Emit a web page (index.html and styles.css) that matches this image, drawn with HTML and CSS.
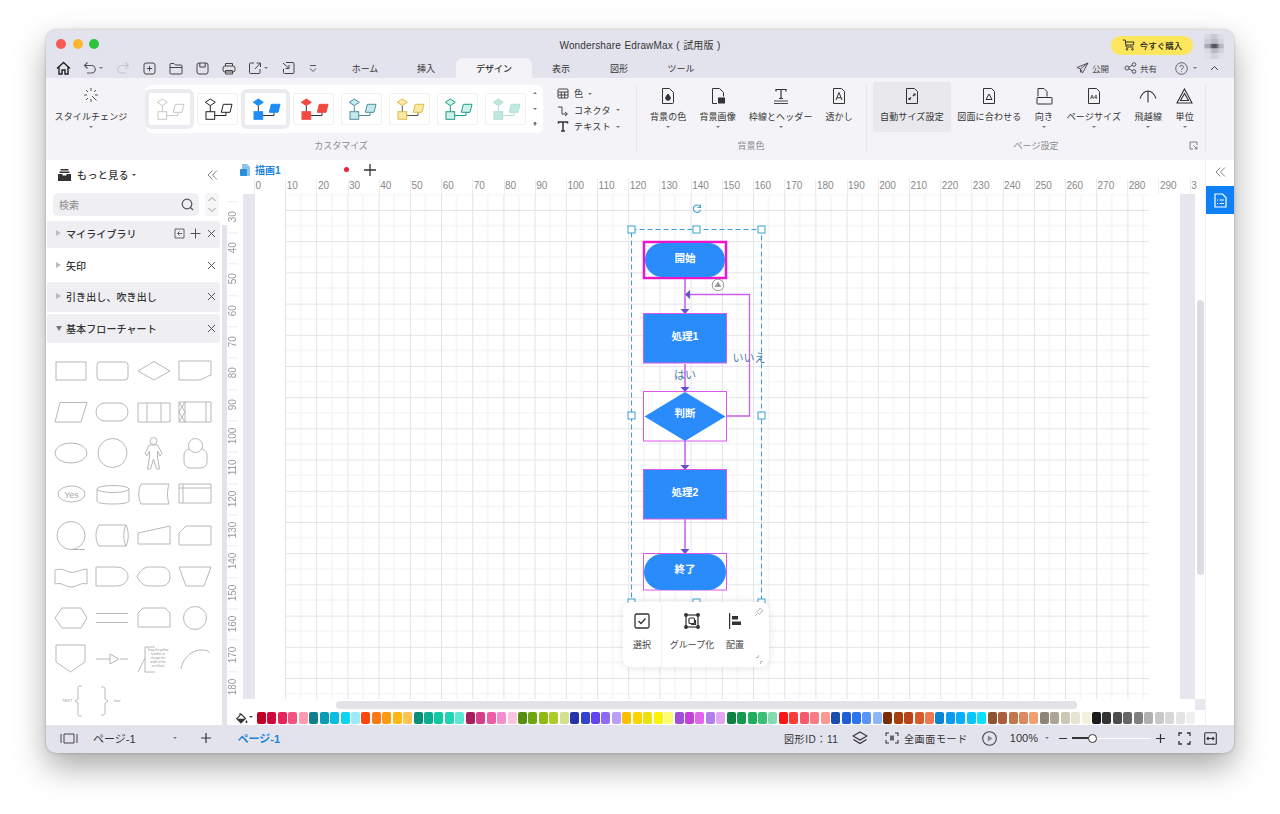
FILE: index.html
```html
<!DOCTYPE html>
<html lang="ja">
<head>
<meta charset="utf-8">
<title>Wondershare EdrawMax</title>
<link rel="stylesheet" href="styles.css">
</head>
<body>
<svg class="defs" width="0" height="0">
  <symbol id="flow" viewBox="0 0 41 32">
    <path class="cn" d="M13.3 12.5V18.7M17.7 22.5H29V19.3" fill="none" stroke="currentColor"/>
    <path d="M13.3 6 18.3 9.3 13.3 12.6 8.3 9.3Z"/>
    <rect x="9" y="18.7" width="8.7" height="7.6"/>
    <path d="M26.3 11.3H35L33 19.3H24.3Z"/>
  </symbol>
</svg>
<div class="window">
  <header class="titlebar">
    <div class="lights"><i class="red"></i><i class="amber"></i><i class="green"></i></div>
    <div class="title">Wondershare EdrawMax ( 試用版 )</div>
    <div class="title-right">
      <div class="buy">
        <svg width="14" height="12" viewBox="0 0 14 12" fill="none" stroke="#333" stroke-width="1"><path d="M1 1h2.2l1 7h7.3M3.5 3H12l-.8 3H4"/><circle cx="5" cy="10.3" r=".8"/><circle cx="10.5" cy="10.3" r=".8"/></svg>
        <span>今すぐ購入</span>
      </div>
    </div>
    <svg class="avatar" width="20" height="25" viewBox="0 0 20 36" preserveAspectRatio="none"><g class="mosaic"><rect x="0" y="0" width="7" height="7" fill="#d8d8e0"/><rect x="7" y="0" width="7" height="7" fill="#c9c9d2"/><rect x="14" y="0" width="6" height="7" fill="#dcdce4"/><rect x="0" y="7" width="7" height="7" fill="#cdcdd6"/><rect x="7" y="7" width="7" height="7" fill="#bcbcc4"/><rect x="14" y="7" width="6" height="7" fill="#d4d4dc"/><rect x="0" y="14" width="7" height="7" fill="#a8a8b0"/><rect x="7" y="14" width="7" height="7" fill="#55555c"/><rect x="14" y="14" width="6" height="7" fill="#b4b4bc"/><rect x="0" y="21" width="7" height="7" fill="#dadae2"/><rect x="7" y="21" width="7" height="7" fill="#b8b8c0"/><rect x="14" y="21" width="6" height="7" fill="#d0d0d8"/><rect x="0" y="28" width="7" height="8" fill="#e0e0e8"/><rect x="7" y="28" width="7" height="8" fill="#d2d2da"/><rect x="14" y="28" width="6" height="8" fill="#e0e0e8"/></g></svg>
  </header>

  <nav class="tabbar">
    <div class="quick">
      <span class="qb"><svg width="15" height="14" viewBox="0 0 15 14" fill="none" stroke="#222" stroke-width="1.4"><path d="M1 7.5 7.5 1.5 14 7.5M3 6v7h3V9h3v4h3V6"/></svg></span>
      <span class="qb wide"><svg width="14" height="14" viewBox="0 0 14 14" fill="none" stroke="#555" stroke-width="1.1"><path d="M4.5 1.5 1.5 4.5 4.5 7.5M1.5 4.5H8.5a3.7 3.7 0 0 1 0 7.5H4"/></svg><b class="caret"></b></span>
      <span class="qb"><svg width="14" height="14" viewBox="0 0 14 14" fill="none" stroke="#c4c4cc" stroke-width="1.1"><path d="M9.5 1.5 12.5 4.5 9.5 7.5M12.5 4.5H5.5a3.7 3.7 0 0 0 0 7.5H10"/></svg></span>
      <span class="qb"><svg width="13" height="13" viewBox="0 0 13 13" fill="none" stroke="#444" stroke-width="1"><rect x="1" y="1" width="11" height="11" rx="2"/><path d="M6.5 3.8v5.4M3.8 6.5h5.4"/></svg></span>
      <span class="qb"><svg width="14" height="13" viewBox="0 0 14 13" fill="none" stroke="#444" stroke-width="1"><path d="M1 11V2.5a1 1 0 0 1 1-1h3l1.5 1.5H12a1 1 0 0 1 1 1V11a1 1 0 0 1-1 1H2a1 1 0 0 1-1-1ZM1 5.500h12"/></svg></span>
      <span class="qb"><svg width="13" height="13" viewBox="0 0 13 13" fill="none" stroke="#444" stroke-width="1"><rect x="1" y="1" width="11" height="11" rx="2"/><path d="M3.800 1v4h5.400V1"/></svg></span>
      <span class="qb"><svg width="14" height="13" viewBox="0 0 14 13" fill="none" stroke="#444" stroke-width="1"><rect x="1" y="4" width="12" height="6" rx="2"/><path d="M3.500 4V1.500h7V4M3.500 8.500h7V12h-7Z"/></svg></span>
      <span class="qb wide"><svg width="14" height="14" viewBox="0 0 14 14" fill="none" stroke="#444" stroke-width="1"><path d="M12 8v3.500a1 1 0 0 1-1 1H2.500a1 1 0 0 1-1-1V3a1 1 0 0 1 1-1H6M7 8l5.500-6M8.500 2h4v4"/></svg><b class="caret"></b></span>
      <span class="qb"><svg width="13" height="14" viewBox="0 0 13 14" fill="none" stroke="#444" stroke-width="1"><path d="M4 1.500H11a1 1 0 0 1 1 1v9a1 1 0 0 1-1 1H2.500a1 1 0 0 1-1-1V8M1 2l5.500 5M3.500 7.500h3.500V4"/></svg></span>
      <span class="qb more"><svg width="8" height="9" viewBox="0 0 8 9" fill="none" stroke="#555" stroke-width="1"><path d="M1 1.500h6M1 4.500l3 3 3-3"/></svg></span>
    </div>
    <div class="tabs">
      <span class="tab t-home">ホーム</span>
      <span class="tab t-ins">挿入</span>
      <span class="tab t-des active">デザイン</span>
      <span class="tab t-view">表示</span>
      <span class="tab t-shape">図形</span>
      <span class="tab t-tool">ツール</span>
    </div>
    <div class="tab-right">
      <span class="tr-item"><svg width="13" height="12" viewBox="0 0 13 12" fill="none" stroke="#444" stroke-width=".9"><path d="M12 1 1 5.500l3.500 1.500L12 1 6.500 11 4.500 7v3.500"/></svg>公開</span>
      <span class="tr-item share"><svg width="13" height="12" viewBox="0 0 13 12" fill="none" stroke="#444" stroke-width=".9"><circle cx="3" cy="6" r="2"/><circle cx="10" cy="2.500" r="1.800"/><circle cx="10" cy="9.500" r="1.800"/><path d="M4.800 5.200 8.300 3.300M4.800 6.800l3.500 1.900"/></svg>共有</span>
      <span class="tr-help"><svg width="13" height="13" viewBox="0 0 13 13" fill="none" stroke="#555" stroke-width=".9"><circle cx="6.500" cy="6.500" r="5.800"/><path d="M4.800 5a1.800 1.800 0 1 1 2.500 1.700c-.6.300-.8.600-.8 1.300M6.500 9.300v.8"/></svg><b class="caret"></b></span>
      <svg class="tr-up" width="9" height="6" viewBox="0 0 9 6" fill="none" stroke="#444" stroke-width="1"><path d="M1 5 4.500 1.500 8 5"/></svg>
    </div>
  </nav>

  <section class="ribbon">
    <div class="group g-custom">
      <div class="gbody">
        <div class="style-change">
          <svg width="16" height="16" viewBox="0 0 16 16" fill="none" stroke="#555" stroke-width="1"><path d="M8 1v3M8 12v3M1 8h3M12 8h3M3 3l2 2M13 3l-2 2M3 13l2-2M9 9l4.500 4.500"/></svg>
          <span>スタイルチェンジ</span>
          <b class="caret"></b>
        </div>
        <div class="styles">
          <span class="th sel t1"><svg width="41" height="32"><use href="#flow"/></svg></span>
          <span class="th t2"><svg width="41" height="32"><use href="#flow"/></svg></span>
          <span class="th sel t3"><svg width="41" height="32"><use href="#flow"/></svg></span>
          <span class="th t4"><svg width="41" height="32"><use href="#flow"/></svg></span>
          <span class="th t5"><svg width="41" height="32"><use href="#flow"/></svg></span>
          <span class="th t6"><svg width="41" height="32"><use href="#flow"/></svg></span>
          <span class="th t7"><svg width="41" height="32"><use href="#flow"/></svg></span>
          <span class="th t8"><svg width="41" height="32"><use href="#flow"/></svg></span>
          <span class="st-arrows"><b class="up"></b><b class="caret"></b><b class="caret lined"></b></span>
        </div>
        <div class="opts">
          <div class="opt"><svg width="12" height="11" viewBox="0 0 12 11" fill="none" stroke="#444" stroke-width="1"><rect x="1" y="1" width="10" height="9" rx="1"/><path d="M1 4h10M1 7h10M4.300 4v6M7.600 4v6"/></svg><span>色</span><b class="caret"></b></div>
          <div class="opt"><svg width="12" height="11" viewBox="0 0 12 11" fill="none" stroke="#444" stroke-width="1"><path d="M1 2h4v7h5M8 7l2.500 2L8 11"/></svg><span>コネクタ</span><b class="caret"></b></div>
          <div class="opt"><svg width="12" height="11" viewBox="0 0 12 11" fill="none" stroke="#333" stroke-width="1.500"><path d="M1.500 2.500V1h9v1.500M6 1v9M4 10h4"/></svg><span>テキスト</span><b class="caret"></b></div>
        </div>
      </div>
      <div class="glabel">カスタマイズ</div>
    </div>

    <div class="group g-bg">
      <div class="gbody items">
        <div class="item"><svg width="14" height="17" viewBox="0 0 14 17" fill="none" stroke="#333" stroke-width="1"><path d="M1.500 1h7l4 4v10a1 1 0 0 1-1 1h-10z"/><path d="M7 6.500c-1.500 2-2.300 3-2.300 4a2.300 2.300 0 0 0 4.600 0c0-1-.8-2-2.300-4Z" fill="#333"/></svg><span>背景の色</span><b class="caret"></b></div>
        <div class="item"><svg width="14" height="17" viewBox="0 0 14 17" fill="none" stroke="#333" stroke-width="1"><path d="M6 16H1.500V1h7l4 4v4"/><rect x="7.500" y="10.500" width="6" height="5" fill="#333"/></svg><span>背景画像</span><b class="caret"></b></div>
        <div class="item"><svg width="16" height="17" viewBox="0 0 16 17" fill="none" stroke="#333" stroke-width="1.200"><path d="M3 4V2h10v2M8 2v9M6 11h4"/><path d="M1 13.500h14M1 16h14" stroke-width=".9"/></svg><span>枠線とヘッダー</span><b class="caret"></b></div>
        <div class="item"><svg width="14" height="17" viewBox="0 0 14 17" fill="none" stroke="#333" stroke-width="1"><path d="M1.500 1h8l3 3v12h-11z"/><path d="M4 12.500 7 5l3 7.500M5 10.300h4"/></svg><span>透かし</span></div>
      </div>
      <div class="glabel">背景色</div>
    </div>

    <div class="group g-page">
      <div class="gbody items page-items">
        <div class="item on"><svg width="14" height="17" viewBox="0 0 14 17" fill="none" stroke="#333" stroke-width="1"><path d="M1.500 1h8l3 3v12h-11z"/><path d="M8.500 6.500h1.500V8M5.500 12H4v-1.500M10 6.500 8 8.500M4 12l2-2" stroke-width="1.200"/></svg><span>自動サイズ設定</span></div>
        <div class="item"><svg width="14" height="17" viewBox="0 0 14 17" fill="none" stroke="#333" stroke-width="1"><path d="M1.500 1h8l3 3v12h-11z"/><path d="M7 6.500 10 12H4Z"/></svg><span>図面に合わせる</span></div>
        <div class="item"><svg width="17" height="17" viewBox="0 0 17 17" fill="none" stroke="#333" stroke-width="1"><path d="M2 9V1h6l3 3v5"/><rect x="1" y="10" width="15" height="6.500" rx=".5"/></svg><span>向き</span><b class="caret"></b></div>
        <div class="item"><svg width="14" height="17" viewBox="0 0 14 17" fill="none" stroke="#333" stroke-width="1"><path d="M1.500 1h8l3 3v12h-11z"/><text x="3" y="11.500" class="a4">A4</text></svg><span>ページサイズ</span><b class="caret"></b></div>
        <div class="item"><svg width="18" height="17" viewBox="0 0 18 17" fill="none" stroke="#333" stroke-width="1.100"><path d="M9 3.500V15M1 11c2-5 4.500-7.500 8-7.500s6 2.500 8 7.500"/></svg><span>飛越線</span><b class="caret"></b></div>
        <div class="item"><svg width="17" height="17" viewBox="0 0 17 17" fill="none" stroke="#333" stroke-width="1.100"><path d="M8.500 1.500 16 15.500H1ZM8.500 6 12.500 13h-8Z"/></svg><span>単位</span><b class="caret"></b></div>
      </div>
      <div class="glabel">ページ設定
        <svg class="launcher" width="9" height="9" viewBox="0 0 9 9" fill="none" stroke="#666" stroke-width=".8"><path d="M4 8H1V1h7v3M4.500 4.500 8 8M8 5.500V8H5.500"/></svg>
      </div>
    </div>
  </section>

  <main class="main">
    <aside class="sidebar">
      <div class="sb-head">
        <svg width="13" height="12" viewBox="0 0 13 12"><path d="M2.500 0h8v1.500h-8zM1.500 2.500h10v1.500h-10zM0 5h4.500v1.500h4V5H13v7H0z" fill="#333"/></svg>
        <span>もっと見る</span><b class="caret dark"></b>
        <svg class="dbl" width="11" height="10" viewBox="0 0 11 10" fill="none" stroke="#777" stroke-width=".9"><path d="M5.500 .5 1 5l4.500 4.500M10 .5 5.500 5 10 9.500"/></svg>
      </div>
      <div class="search-row">
        <div class="search"><span>検索</span><svg width="13" height="13" viewBox="0 0 13 13" fill="none" stroke="#555" stroke-width="1.200"><circle cx="6" cy="6" r="4.800"/><path d="M9.500 9.500 12 12"/></svg></div>
        <div class="updown"><svg width="14" height="8" viewBox="0 0 14 8" fill="none" stroke="#999"><path d="M3.500 6 7 2.500 10.500 6"/></svg><svg width="14" height="8" viewBox="0 0 14 8" fill="none" stroke="#999"><path d="M3.500 2 7 5.500 10.500 2"/></svg></div>
      </div>
      <div class="lib grey r1"><b class="tri"></b><span>マイライブラリ</span>
        <svg class="li" width="11" height="11" viewBox="0 0 11 11" fill="none" stroke="#555" stroke-width=".9"><path d="M1 1h9v9H1zM8 5.500H3.500M5.500 3.500l-2 2 2 2"/></svg>
        <svg class="li" width="11" height="11" viewBox="0 0 11 11" fill="none" stroke="#555"><path d="M5.500 .5v10M.5 5.500h10"/></svg>
        <svg class="li x" width="9" height="9" viewBox="0 0 9 9" fill="none" stroke="#555"><path d="M1 1l7 7M8 1 1 8"/></svg>
      </div>
      <div class="lib r2"><b class="tri"></b><span>矢印</span><svg class="li x push" width="9" height="9" viewBox="0 0 9 9" fill="none" stroke="#555"><path d="M1 1l7 7M8 1 1 8"/></svg></div>
      <div class="lib grey r3"><b class="tri"></b><span>引き出し、吹き出し</span><svg class="li x push" width="9" height="9" viewBox="0 0 9 9" fill="none" stroke="#555"><path d="M1 1l7 7M8 1 1 8"/></svg></div>
      <div class="lib grey r4"><b class="tri open"></b><span>基本フローチャート</span><svg class="li x push" width="9" height="9" viewBox="0 0 9 9" fill="none" stroke="#555"><path d="M1 1l7 7M8 1 1 8"/></svg></div>
      <svg class="shapes" width="176" height="382" viewBox="46 343 176 382" fill="none" stroke="#b8b8b8" stroke-width="1">
        <rect x="56" y="362" width="30" height="18"/>
        <rect x="97" y="362" width="31" height="18" rx="3"/>
        <path d="M138 371 154 361.500 170 371 154 380Z"/>
        <path d="M179 361h32v14c-5 1-7 5-13 5h-19Z"/>
        <path d="M60 402.500H87L81 422H55Z"/>
        <rect x="96" y="403" width="32" height="18" rx="9"/>
        <path d="M138 403h32v19h-32ZM147 403v19M161 403v19"/>
        <path d="M179 402h32v20h-32ZM185 402v20M206 402v20M179 402l6 10-6 10M185 402l-6 10 6 10"/>
        <ellipse cx="71" cy="453" rx="16" ry="10"/>
        <circle cx="112.500" cy="453" r="14.500"/>
        <circle cx="153.500" cy="441" r="3.500"/>
        <path d="M149.500 445h8l4.500 8-2 3-2.500-5v6l2 12h-3l-3-10-3 10h-3l2-12v-6l-2.500 5-2-3Z"/>
        <rect x="184" y="449" width="23" height="19" rx="6"/>
        <circle cx="195.500" cy="445.500" r="7" fill="#fff"/>
        <ellipse cx="71.500" cy="494" rx="13.500" ry="8"/>
        <text x="71.500" y="498" class="yes">Yes</text>
        <path d="M97 489v12c0 2 7 3 16 3s16-1 16-3v-12"/><ellipse cx="113" cy="489" rx="16" ry="3.500"/>
        <path d="M141 484h28c-2 7-2 13 0 20h-28c-3-6-3-14 0-20Z"/>
        <path d="M179 484h32v19h-32ZM179 488h32M183 484v19"/>
        <circle cx="71" cy="535.500" r="14"/><path d="M71 549.500h14"/>
        <path d="M99 525h27c3 6 3 15 0 21H99c-4-5-4-16 0-21ZM126 525c-3 6-3 15 0 21"/>
        <path d="M138 533 170 526v18h-32Z"/>
        <path d="M179 533l7-7h25v19h-32Z"/>
        <path d="M55 570c10-3 12 4 20 2 5-1 8-3 12-3v15c-6-2-10 3-16 3-6 0-8-5-16-3Z"/>
        <path d="M96 567h20c8 0 12 5 12 9.500s-4 9.500-12 9.500H96Z"/>
        <path d="M137 576.500c2-4 6-9.500 12-9.500h12c6 0 9 4 9 9.500s-3 9.500-9 9.500h-12c-6 0-10-5-12-9.500Z"/>
        <path d="M179 567h32l-7 19h-18Z"/>
        <path d="M55 618l7-10h19l6 10-6 10H62Z"/>
        <path d="M96 613.500h32M96 622.500h32"/>
        <path d="M138 627v-14l5-5h22l5 5v14Z"/>
        <circle cx="195" cy="618" r="11.500"/>
        <path d="M56 645h29v17l-14.500 10L56 662Z"/>
        <path d="M96 659h14M120 659h8M110 654v10l9-5Z"/>
        <path d="M155 647h-10v25h10M145 658l-7 14"/>
        <text x="158" y="651" class="tiny">Drag the yellow</text><text x="158" y="655" class="tiny">handles to</text><text x="158" y="659" class="tiny">change the</text><text x="158" y="663" class="tiny">width of the</text><text x="158" y="667" class="tiny">text block</text>
        <path d="M181 669c2-12 12-20 22-19 3 0 6 1 7 3"/>
        <path d="M82 686c-4 0-4 0-4 4v9l-3 2 3 2v9c0 4 0 4 4 4M101 687c4 0 4 0 4 4v8l3 2-3 2v8c0 4 0 4-4 4"/>
        <text x="62" y="702" class="tiny2">TEXT</text><text x="114" y="702" class="tiny2">text</text>
      </svg>
    </aside>
    <div class="sb-scroll"></div>

    <div class="center">
      <div class="doc-tabs">
        <svg width="11" height="12" viewBox="0 0 11 12"><path d="M2 0h5l3 3v8a1 1 0 0 1-1 1H2Z" fill="#8dc4ec"/><rect x="0" y="5" width="7" height="7" rx="1" fill="#2b8fd8"/></svg>
        <span class="doc-name">描画1</span>
        <i class="dot"></i>
        <svg class="doc-add" width="12" height="12" viewBox="0 0 12 12" fill="none" stroke="#333" stroke-width="1.300"><path d="M6 0v12M0 6h12"/></svg>
      </div>
      <div class="hruler"><span>0</span><span>10</span><span>20</span><span>30</span><span>40</span><span>50</span><span>60</span><span>70</span><span>80</span><span>90</span><span>100</span><span>110</span><span>120</span><span>130</span><span>140</span><span>150</span><span>160</span><span>170</span><span>180</span><span>190</span><span>200</span><span>210</span><span>220</span><span>230</span><span>240</span><span>250</span><span>260</span><span>270</span><span>280</span><span>290</span><span>300</span></div>
      <div class="canvas-row">
        <div class="vruler"><span>30</span><span>40</span><span>50</span><span>60</span><span>70</span><span>80</span><span>90</span><span>100</span><span>110</span><span>120</span><span>130</span><span>140</span><span>150</span><span>160</span><span>170</span><span>180</span></div>
        <div class="canvas">
          <svg class="board" width="962" height="505" viewBox="243 194 962 505">
            <defs>
              <pattern id="grid" x="285" y="210" width="31.200" height="31.200" patternUnits="userSpaceOnUse">
                <path d="M15.600 0V31.200M0 15.600H31.200" stroke="#f0f0f3" stroke-width="1" fill="none"/>
                <path d="M.5 0V31.200M0 .5H31.200" stroke="#e3e3e7" stroke-width="1" fill="none"/>
              </pattern>
            </defs>
            <rect x="243" y="194" width="12" height="505" fill="#e6e6ef"/>
            <rect x="255" y="194" width="925" height="505" fill="#fff"/>
            <rect x="1180" y="194" width="15" height="505" fill="#e6e6ef"/>
            <rect x="285" y="194" width="864" height="505" fill="url(#grid)"/>
            <rect x="1197" y="300" width="7" height="275" rx="3.500" fill="#dcdce2"/>

            <g fill="none" stroke="#c85fe6" stroke-width="1.500">
              <path d="M685 278V310M685 364V389M685 441V466M685 519V550"/>
              <path d="M727 416H749.500V294.500H690" stroke-width="1.300"/>
            </g>
            <g fill="#6750cf">
              <path d="M680.500 309h9L685 314ZM680.500 387h9L685 392ZM680.500 465h9L685 470ZM680.500 549h9L685 554ZM690 290v9L685 294.500Z"/>
            </g>

            <rect x="644" y="242" width="82" height="36" fill="#fff" stroke="#ee14cc" stroke-width="2.500"/>
            <rect x="645" y="243" width="80" height="34" rx="17" fill="#2a8bfb"/>
            <rect x="643.500" y="313.500" width="83" height="49.500" fill="#2a8bfb" stroke="#d957ea"/>
            <rect x="643.500" y="391.500" width="83" height="49.500" fill="#fff" stroke="#d957ea"/>
            <path d="M644.500 416.500 685 392 725.500 416.500 685 441Z" fill="#2a8bfb"/>
            <rect x="643.500" y="469.500" width="83" height="49.500" fill="#2a8bfb" stroke="#d957ea"/>
            <rect x="643.500" y="553.500" width="83" height="36.500" fill="#fff" stroke="#d957ea"/>
            <rect x="644" y="554" width="82" height="36" rx="18" fill="#2a8bfb"/>

            <text x="685" y="262" class="node">開始</text>
            <text x="685" y="340" class="node">処理1</text>
            <text x="685" y="417" class="node">判断</text>
            <text x="685" y="496" class="node">処理2</text>
            <text x="685" y="573" class="node">終了</text>
            <text x="685" y="379" class="lab">はい</text>
            <text x="749" y="362" class="lab">いいえ</text>

            <circle cx="718" cy="285" r="5.800" fill="#fff" stroke="#999" stroke-width="1"/>
            <path d="M718 281.500 721.500 287h-7Z" fill="#999"/>

            <rect x="631.500" y="229.500" width="130" height="374" fill="none" stroke="#3f9fd4" stroke-width="1.100" stroke-dasharray="5 3"/>
            <g fill="#fff" stroke="#3f9fd4" stroke-width="1">
              <rect x="628" y="226" width="7" height="7"/><rect x="693" y="226" width="7" height="7"/><rect x="758" y="226" width="7" height="7"/>
              <rect x="628" y="412" width="7" height="7"/><rect x="758" y="412" width="7" height="7"/>
              <rect x="628" y="599" width="7" height="7"/><rect x="693" y="599" width="7" height="7"/><rect x="758" y="599" width="7" height="7"/>
            </g>
            <path d="M700 206.500A3.700 3.700 0 1 0 700.500 210M700.500 204.500v3h-3" fill="none" stroke="#3f9fd4" stroke-width="1.100"/>
          </svg>
          <div class="mini">
            <div class="mini-cell m1"><svg width="16" height="16" viewBox="0 0 16 16" fill="none" stroke="#333" stroke-width="1.300"><rect x="1" y="1" width="14" height="14" rx="1.500"/><path d="M4.500 8 7 10.500 11.500 5.500"/></svg><span>選択</span></div>
            <div class="mini-cell m2"><svg width="16" height="16" viewBox="0 0 16 16" fill="none" stroke="#333" stroke-width="1.200"><rect x="2" y="2" width="12" height="12"/><rect x="5" y="5" width="5.500" height="5.500" rx="1"/><path d="M7 11.500h4.500V7"/><g fill="#333"><circle cx="2" cy="2" r="1.300"/><circle cx="14" cy="2" r="1.300"/><circle cx="2" cy="14" r="1.300"/><circle cx="14" cy="14" r="1.300"/></g></svg><span>グループ化</span></div>
            <div class="mini-cell m3"><svg width="14" height="16" viewBox="0 0 14 16" fill="#333"><path d="M1 0h1.200v16H1z"/><rect x="4" y="3" width="6" height="3.500"/><rect x="4" y="8.500" width="9" height="3.500"/></svg><span>配置</span></div>
            <svg class="pin" width="10" height="10" viewBox="0 0 10 10" fill="none" stroke="#aaa" stroke-width=".8"><path d="M6 1l3 3-2 1-1.500 2.500-3-3L5 3ZM3 7 1 9"/></svg>
            <svg class="shrink" width="9" height="9" viewBox="0 0 9 9" fill="none" stroke="#aaa" stroke-width=".8"><path d="M1 2.500h2.500V0M8 6.500H5.500V9"/></svg>
          </div>
        </div>
      </div>
      <div class="hscroll"><i class="thumb"></i><i class="corner"></i></div>
      <div class="palette">
        <svg class="bucket" width="12" height="12" viewBox="0 0 12 12"><path d="M3.500 1.500 5 3M5 2 9.500 6.500 5 11 .8 6.800Z" fill="none" stroke="#333" stroke-width="1.100"/><path d="M1.200 6.800h7.800L5 10.800Z" fill="#333"/><path d="M10.500 8c-.6 1-1 1.500-1 2a1 1 0 0 0 2 0c0-.5-.4-1-1-2Z" fill="#333"/></svg>
        <b class="caret dark"></b>
        <div class="swatches">
          <i style="background:#c00023"></i><i style="background:#d4073a"></i><i style="background:#e8235c"></i><i style="background:#f2537f"></i><i style="background:#fb9cb3"></i>
          <i style="background:#0f7f8c"></i><i style="background:#0b9cb5"></i><i style="background:#09bce0"></i><i style="background:#0cd5f0"></i><i style="background:#9ce9f8"></i>
          <i style="background:#f9470f"></i><i style="background:#fb7a15"></i><i style="background:#fd9a13"></i><i style="background:#fdb813"></i><i style="background:#fdc550"></i>
          <i style="background:#0a8f76"></i><i style="background:#0cae90"></i><i style="background:#10c9a3"></i><i style="background:#1fd4b0"></i><i style="background:#5be8d0"></i>
          <i style="background:#a71e5c"></i><i style="background:#d6408a"></i><i style="background:#ec5fa6"></i><i style="background:#f58ccc"></i><i style="background:#fbc3e0"></i>
          <i style="background:#548f0f"></i><i style="background:#6fa510"></i><i style="background:#8fba12"></i><i style="background:#abcc26"></i><i style="background:#d3e08f"></i>
          <i style="background:#2433a8"></i><i style="background:#3345cf"></i><i style="background:#6245ec"></i><i style="background:#8d6bf2"></i><i style="background:#b7a0f5"></i>
          <i style="background:#fdbf00"></i><i style="background:#fdd400"></i><i style="background:#ece00f"></i><i style="background:#fdf200"></i><i style="background:#fdfb70"></i>
          <i style="background:#a04fd6"></i><i style="background:#c73fdb"></i><i style="background:#e564ee"></i><i style="background:#b37eea"></i><i style="background:#e2a6ee"></i>
          <i style="background:#0d7f3e"></i><i style="background:#149a4f"></i><i style="background:#1fae5e"></i><i style="background:#3cbd78"></i><i style="background:#80dcb0"></i>
          <i style="background:#f91616"></i><i style="background:#fb3a3a"></i><i style="background:#f8586a"></i><i style="background:#fa7a85"></i><i style="background:#fa9a90"></i>
          <i style="background:#1a4db0"></i><i style="background:#1f5ed3"></i><i style="background:#2a75ee"></i><i style="background:#5a94f7"></i><i style="background:#8fb5f9"></i>
          <i style="background:#7a2c07"></i><i style="background:#a83f0b"></i><i style="background:#b8451a"></i><i style="background:#d95a2d"></i><i style="background:#ef7a4f"></i>
          <i style="background:#0a85d4"></i><i style="background:#0a9bee"></i><i style="background:#0aaefa"></i><i style="background:#0ac5fa"></i><i style="background:#0ae0fa"></i>
          <i style="background:#8d5434"></i><i style="background:#a8603f"></i><i style="background:#c0774f"></i><i style="background:#d98a60"></i><i style="background:#f29f6f"></i>
          <i style="background:#8d8678"></i><i style="background:#aaa594"></i><i style="background:#ccc8b5"></i><i style="background:#e8e3d0"></i><i style="background:#f6f1dc"></i>
          <i style="background:#1c1c1c"></i><i style="background:#333333"></i><i style="background:#4d4d4d"></i><i style="background:#666666"></i><i style="background:#808080"></i>
          <i style="background:#b0b0b0"></i><i style="background:#c8c8c8"></i><i style="background:#d8d8d8"></i><i style="background:#e4e4e4"></i><i style="background:#f0f0f0"></i>
        </div>
      </div>
    </div>

    <aside class="rightpanel">
      <svg width="11" height="10" viewBox="0 0 11 10" fill="none" stroke="#777" stroke-width=".9"><path d="M5.500 .5 1 5l4.500 4.500M10 .5 5.500 5 10 9.500"/></svg>
      <div class="rp-btn"><svg width="13" height="15" viewBox="0 0 13 15" fill="none" stroke="#fff" stroke-width="1.200"><path d="M1 1h7.500L12 4.500V14H1Z"/><path d="M3 7h1M5.500 7H10M3 10.500h1M5.500 10.500H10"/></svg></div>
    </aside>
  </main>

  <footer class="statusbar">
    <svg class="st-panel" width="18" height="11" viewBox="0 0 18 11" fill="none" stroke="#444" stroke-width="1"><path d="M1 1v9M4 1h10v9H4ZM17 1v9"/></svg>
    <span class="pg">ページ-1</span>
    <b class="caret pg-caret"></b>
    <svg class="pg-add" width="10" height="10" viewBox="0 0 10 10" fill="none" stroke="#333" stroke-width="1.200"><path d="M5 0v10M0 5h10"/></svg>
    <span class="pg-active">ページ-1</span>
    <div class="st-right">
      <span class="sid">図形ID：11</span>
      <svg class="s-layers" width="16" height="14" viewBox="0 0 16 14" fill="none" stroke="#333" stroke-width="1.200"><path d="M8 1 15 5 8 9 1 5ZM1.500 8.500 8 12.500l6.500-4"/></svg>
      <svg class="s-full" width="14" height="12" viewBox="0 0 14 12" fill="none" stroke="#333" stroke-width="1.100"><path d="M1 4V1h3M10 1h3v3M13 8v3h-3M4 11H1V8"/><rect x="5" y="3.500" width="4" height="5" fill="#666" stroke="none"/></svg>
      <span class="s-fulltext">全画面モード</span>
      <svg class="s-play" width="15" height="15" viewBox="0 0 15 15" fill="none" stroke="#444" stroke-width="1.100"><circle cx="7.500" cy="7.500" r="6.800"/><path d="M5.800 4.500 10.500 7.500 5.800 10.500Z" fill="#888" stroke="none"/></svg>
      <span class="s-zoom">100%</span>
      <b class="caret s-caret"></b>
      <i class="s-minus"></i>
      <div class="slider"><i class="knob"></i></div>
      <svg class="s-plus" width="9" height="9" viewBox="0 0 9 9" fill="none" stroke="#333" stroke-width="1.200"><path d="M4.500 0v9M0 4.500h9"/></svg>
      <svg class="s-expand" width="13" height="13" viewBox="0 0 13 13" fill="none" stroke="#333" stroke-width="1.300"><path d="M1 4V1h3M9 1h3v3M12 9v3H9M4 12H1V9"/></svg>
      <svg class="s-fit" width="13" height="13" viewBox="0 0 13 13" fill="none" stroke="#333" stroke-width="1.100"><rect x=".7" y=".7" width="11.600" height="11.600" rx="1"/><path d="M3 6.500h7M4.500 5 3 6.500 4.500 8M8.500 5 10 6.500 8.500 8"/></svg>
    </div>
  </footer>
</div>
</body>
</html>
```

FILE: styles.css
```css
* { box-sizing: border-box; }
html, body { margin: 0; height: 814px; overflow: hidden; background: #fff; }
body {
  font-family: "Liberation Sans", "Noto Sans CJK JP", sans-serif;
  color: #333;
  font-size: 9px;
}
.defs { position: absolute; }
i, b { display: block; font-style: normal; }
svg { display: block; flex: none; }

.window {
  margin: 30px 46px 0;
  width: 1188px;
  height: 723px;
  border-radius: 10px;
  background: #e3e3ee;
  box-shadow: 0 14px 32px rgba(0,0,0,.34), 0 0 3px rgba(0,0,0,.25);
  display: flex;
  flex-direction: column;
  overflow: hidden;
  position: relative;
}

.caret {
  width: 0; height: 0;
  border-left: 2px solid transparent;
  border-right: 2px solid transparent;
  border-top: 2.500px solid #777;
}
.caret.dark { border-top-color: #444; }

/* Title bar */
.titlebar { height: 28px; display: grid; grid-template-columns: 1fr auto 1fr; align-items: center; flex: none; }
.lights { display: flex; gap: 6.500px; padding-left: 10px; }
.lights i { width: 10px; height: 10px; border-radius: 50%; }
.red { background: #f65a52; }
.amber { background: #fcb62f; }
.green { background: #2dc33f; }
.title { font-size: 10px; color: #333; letter-spacing: .15px; word-spacing: .5px; }
.title-right { display: flex; justify-content: flex-end; padding-right: 41px; }
.buy {
  width: 82px; height: 19px; margin-top: 2px;
  border-radius: 10px; background: #fde65c;
  display: flex; align-items: center; justify-content: center; gap: 4px;
  font-size: 8.500px; font-weight: 500; color: #222;
}
.avatar { position: absolute; left: 1158px; top: 4px; }
.mosaic { filter: blur(.8px); }

/* Tab bar */
.tabbar { height: 20px; display: flex; align-items: center; flex: none; padding-left: 4px; }
.quick { display: flex; width: 277px; flex: none; }
.qb { width: 26.500px; height: 20px; display: flex; align-items: center; justify-content: center; flex: none; }
.qb.wide { width: 33px; justify-content: flex-start; padding-left: 6px; gap: 2px; }
.qb.more { margin-left: -2px; }
.tabs { display: flex; margin-left: 7px; }
.tab { height: 20px; display: flex; align-items: center; justify-content: center; font-size: 9px; color: #333; padding-top: 1px; }
.t-home { width: 62px; }
.t-ins { width: 60px; }
.t-des { width: 76px; }
.t-view { width: 58px; }
.t-shape { width: 58px; }
.t-tool { width: 66px; }
.tab.active { background: #f4f4f8; border-radius: 7px 7px 0 0; font-weight: 500; }
.tab-right { margin-left: auto; display: flex; align-items: center; padding-right: 15px; font-size: 8.500px; }
.tr-item { display: flex; align-items: center; gap: 3px; color: #444; }
.tr-item.share { margin-left: 15px; }
.tr-help { display: flex; align-items: center; gap: 5px; margin-left: 18px; }
.tr-up { margin-left: 13px; }

/* Ribbon */
.ribbon { height: 82px; background: #f4f4f8; display: flex; flex: none; }
.group { display: flex; flex-direction: column; flex: none; }
.gbody { height: 56px; display: flex; padding-top: 4px; }
.glabel { flex: 1; display: flex; align-items: center; justify-content: center; color: #8a8a92; font-size: 9px; padding-bottom: 2.500px; position: relative; }
.g-custom { width: 590px; }
.g-bg { width: 230px; position: relative; }
.g-page { width: 340px; position: relative; }
.g-bg::before, .g-page::before, .g-page::after {
  content: ""; position: absolute; top: 7px; bottom: 8px; width: 1px; background: #e6e6ec;
}
.g-bg::before, .g-page::before { left: 0; }
.g-page::after { right: 0; }
.launcher { position: absolute; right: 8px; top: 7px; }

.style-change { width: 90px; margin-right: 10px; flex: none; display: flex; flex-direction: column; align-items: center; padding-top: 5px; color: #333; }
.style-change span { margin-top: 7px; font-size: 9px; letter-spacing: .1px; }
.style-change .caret { margin-top: 3px; }

.styles {
  width: 397px; height: 48px; margin-top: 3px; flex: none;
  background: #fff; border-radius: 6px;
  display: flex; align-items: center; padding-left: 3px;
  gap: 7px; position: relative;
}
.th { width: 41px; height: 32px; background: #fff; outline: 1px solid #f0f0f3; outline-offset: -1px; border-radius: 2px; flex: none; }
.th.sel { outline: 4px solid #ececf0; outline-offset: 0; }
.t1 svg { fill: #fff; stroke: #c8c8c8; color: #c8c8c8; }
.t2 svg { fill: #fff; stroke: #222; color: #222; }
.t3 svg { fill: #1f8cf5; stroke: #1f8cf5; color: #333; }
.t4 svg { fill: #f04a40; stroke: #f04a40; color: #333; }
.t5 svg { fill: #c6e8ee; stroke: #4c8f9c; color: #4c8f9c; }
.t6 svg { fill: #fbe9a0; stroke: #d8bc50; color: #555; }
.t7 svg { fill: #d0f0ea; stroke: #1f9d87; color: #1f9d87; }
.t8 svg { fill: #c3e8e0; stroke: #b0dfd5; color: #b0dfd5; }
.st-arrows { position: absolute; right: 6px; top: 7px; height: 34px; display: flex; flex-direction: column; justify-content: space-between; align-items: center; }
.st-arrows .up { width: 0; height: 0; border-left: 2px solid transparent; border-right: 2px solid transparent; border-bottom: 2.500px solid #777; }
.st-arrows .lined { border-top-width: 3px; box-shadow: 0 -2px 0 -1px #777; }

.opts { margin-left: 14px; padding-top: 5px; display: flex; flex-direction: column; gap: 3.500px; }
.opt { height: 13px; display: flex; align-items: center; font-size: 9px; letter-spacing: .3px; }
.opt svg { margin-right: 5px; }
.opt .caret { margin-left: 5px; }

.items { gap: 13px; padding-left: 14px; }
.item { display: flex; flex-direction: column; align-items: center; height: 50px; padding-top: 5px; flex: none; white-space: nowrap; font-size: 9px; color: #333; }
.item svg { height: 18px; }
.item span { margin-top: 5px; letter-spacing: .1px; }
.item .caret { margin-top: 3px; }
.a4 { font-size: 5.500px; fill: #333; stroke: none; font-family: "Liberation Sans", sans-serif; font-weight: 700; }
.page-items { padding-left: 7px; gap: 13.500px; }
.page-items span { letter-spacing: .15px; }
.item.on { background: #e8e8ed; border-radius: 3px; padding-left: 7px; padding-right: 7px; margin-right: -7px; }

/* Main */
.main { flex: 1; display: flex; background: #fff; min-height: 0; }
.sidebar { width: 176px; flex: none; display: flex; flex-direction: column; }
.sb-scroll { width: 5px; flex: none; margin-top: 65px; background: #e3e3ec; }
.sb-head { height: 33px; display: flex; align-items: center; padding: 0 4px 4px 12px; font-size: 10px; font-weight: 500; letter-spacing: .4px; }
.sb-head span { margin-left: 6px; }
.sb-head .caret { margin-left: 3px; }
.sb-head .dbl { margin-left: auto; margin-right: 0; }
.search-row { display: flex; height: 23px; padding-left: 7px; flex: none; }
.search { width: 146px; background: #f0f0f4; border-radius: 5px; display: flex; align-items: center; justify-content: space-between; padding: 0 5px 0 6px; color: #888; font-size: 10px; }
.updown { width: 14px; margin-left: 6px; display: flex; flex-direction: column; justify-content: space-between; padding: 2px 0; background: #f6f6f9; border-radius: 3px; }
.lib { display: flex; align-items: center; margin-left: 1px; width: 173px; padding: 0 4px 0 10px; font-size: 10px; font-weight: 500; letter-spacing: .1px; color: #333; border-radius: 3px; flex: none; }
.lib.grey { background: #efeff3; }
.r1 { height: 27px; margin-top: 5px; padding-bottom: 3px; }
.r2 { height: 32px; margin-top: 1px; }
.r3 { height: 30px; margin-top: 1px; padding-bottom: 2px; }
.r4 { height: 29px; margin-top: 2px; }
.tri { width: 0; height: 0; border-top: 3.500px solid transparent; border-bottom: 3.500px solid transparent; border-left: 5px solid #bbb; margin: 0 5px 0 -1px; }
.tri.open { border-left: 3.500px solid transparent; border-right: 3.500px solid transparent; border-top: 5px solid #777; border-bottom: 0; margin-right: 4px; }
.li { margin-left: 5px; }
.r1 .li:first-of-type { margin-left: auto; }
.li.x { margin-left: 6px; margin-right: 0; }
.li.push { margin-left: auto; }
.shapes { flex: none; }
.yes { font-size: 9px; fill: #aaa; stroke: none; text-anchor: middle; font-family: "Liberation Sans", sans-serif; }
.tiny { font-size: 3px; fill: #999; stroke: none; text-anchor: middle; font-family: "Liberation Sans", sans-serif; }
.tiny2 { font-size: 4px; fill: #999; stroke: none; font-family: "Liberation Sans", sans-serif; }

/* Center */
.center { width: 978px; flex: none; display: flex; flex-direction: column; }
.doc-tabs { height: 19px; flex: none; display: flex; align-items: center; padding-left: 13px; }
.doc-name { margin-left: 4px; color: #1b84d8; font-size: 10px; font-weight: 700; }
.dot { width: 5px; height: 5px; border-radius: 50%; background: #e8203a; margin-left: 63px; }
.doc-add { margin-left: 15px; }

.hruler { height: 15px; flex: none; display: flex; overflow: hidden; padding-left: 27px; width: 970px; color: #888; font-size: 10px; }
.hruler span { width: 31.200px; flex: none; padding-left: .5px; border-left: 1px solid #ececf0; line-height: 13px; }
.canvas-row { height: 505px; flex: none; display: flex; }
.vruler { width: 16px; flex: none; padding-top: 6.500px; color: #999; font-size: 10px; overflow: hidden; }
.vruler span { height: 31.350px; display: flex; align-items: center; justify-content: center; writing-mode: vertical-rl; transform: rotate(180deg); border-bottom: 1px solid #ececf0; }
.canvas { flex: 1; position: relative; overflow: hidden; }
.node { font-size: 10.500px; font-weight: 700; fill: #fff; text-anchor: middle; }
.lab { font-size: 11px; fill: #4c7fae; text-anchor: middle; }

.mini {
  position: absolute; left: 380px; top: 408px;
  width: 146px; height: 65px;
  background: #fff; border-radius: 8px;
  box-shadow: 0 1px 8px rgba(0,0,0,.1);
  display: flex;
}
.mini-cell { display: flex; flex-direction: column; align-items: center; padding-top: 11px; flex: none; }
.mini-cell svg { height: 16px; }
.mini-cell span { margin-top: 9px; white-space: nowrap; font-size: 9px; color: #444; }
.m1 { width: 39px; border-right: 1px solid #f2f2f4; }
.m2 { width: 60px; }
.m3 { width: 26px; margin-left: 0; }
.pin { position: absolute; right: 5px; top: 5px; }
.shrink { position: absolute; right: 5px; bottom: 3px; }

.hscroll { height: 11px; flex: none; display: flex; align-items: center; padding-left: 109px; position: relative; }
.thumb { width: 741px; height: 8px; border-radius: 4px; background: #e2e2e7; }
.corner { width: 10px; height: 11px; background: #e8e8ee; margin-left: 118px; }
.palette { height: 15px; flex: none; display: flex; align-items: flex-start; padding-left: 9px; padding-top: 2px; }
.bucket { margin-top: 0; }
.palette .caret { margin: 4px 0 0 1px; }
.swatches { display: flex; gap: 1.450px; margin-left: 4px; }
.swatches i { width: 9px; height: 12px; border-radius: 2px; flex: none; }

/* Right panel */
.rightpanel { flex: 1; display: flex; flex-direction: column; align-items: center; border-left: 1px solid #f0f0f3; padding-top: 7px; }
.rp-btn { margin-top: 9px; width: 28px; height: 28px; background: #0f80f5; display: flex; align-items: center; justify-content: center; }

/* Status bar */
.statusbar { height: 28px; flex: none; display: flex; align-items: center; padding: 0 0 1.500px 14px; font-size: 11px; color: #333; }
.pg { margin-left: 15px; }
.pg-caret { margin-left: 37px; }
.pg-add { margin-left: 24px; }
.pg-active { margin-left: 27px; color: #1b84d8; font-weight: 700; }
.st-right { margin-left: auto; display: flex; align-items: center; padding-right: 17px; font-size: 10px; }
.sid { width: 56px; white-space: nowrap; letter-spacing: .6px; }
.s-layers { margin-left: 12px; }
.s-full { margin-left: 17px; }
.s-fulltext { margin-left: 5px; letter-spacing: .65px; }
.s-play { margin-left: 14px; }
.s-zoom { margin-left: 13px; font-size: 11px; }
.s-caret { margin-left: 7px; }
.s-minus { width: 8px; height: 1.400px; background: #333; margin-left: 10px; }
.slider { width: 79px; height: 1px; background: #fff; margin-left: 5px; position: relative; }
.slider::before { content: ""; position: absolute; left: 0; top: -1px; width: 20px; height: 2px; background: #333; }
.knob { position: absolute; left: 15.500px; top: -4px; width: 9px; height: 9px; border-radius: 50%; background: #fff; border: 1.300px solid #333; }
.s-plus { margin-left: 5px; }
.s-expand { margin-left: 13px; }
.s-fit { margin-left: 13px; }
```
